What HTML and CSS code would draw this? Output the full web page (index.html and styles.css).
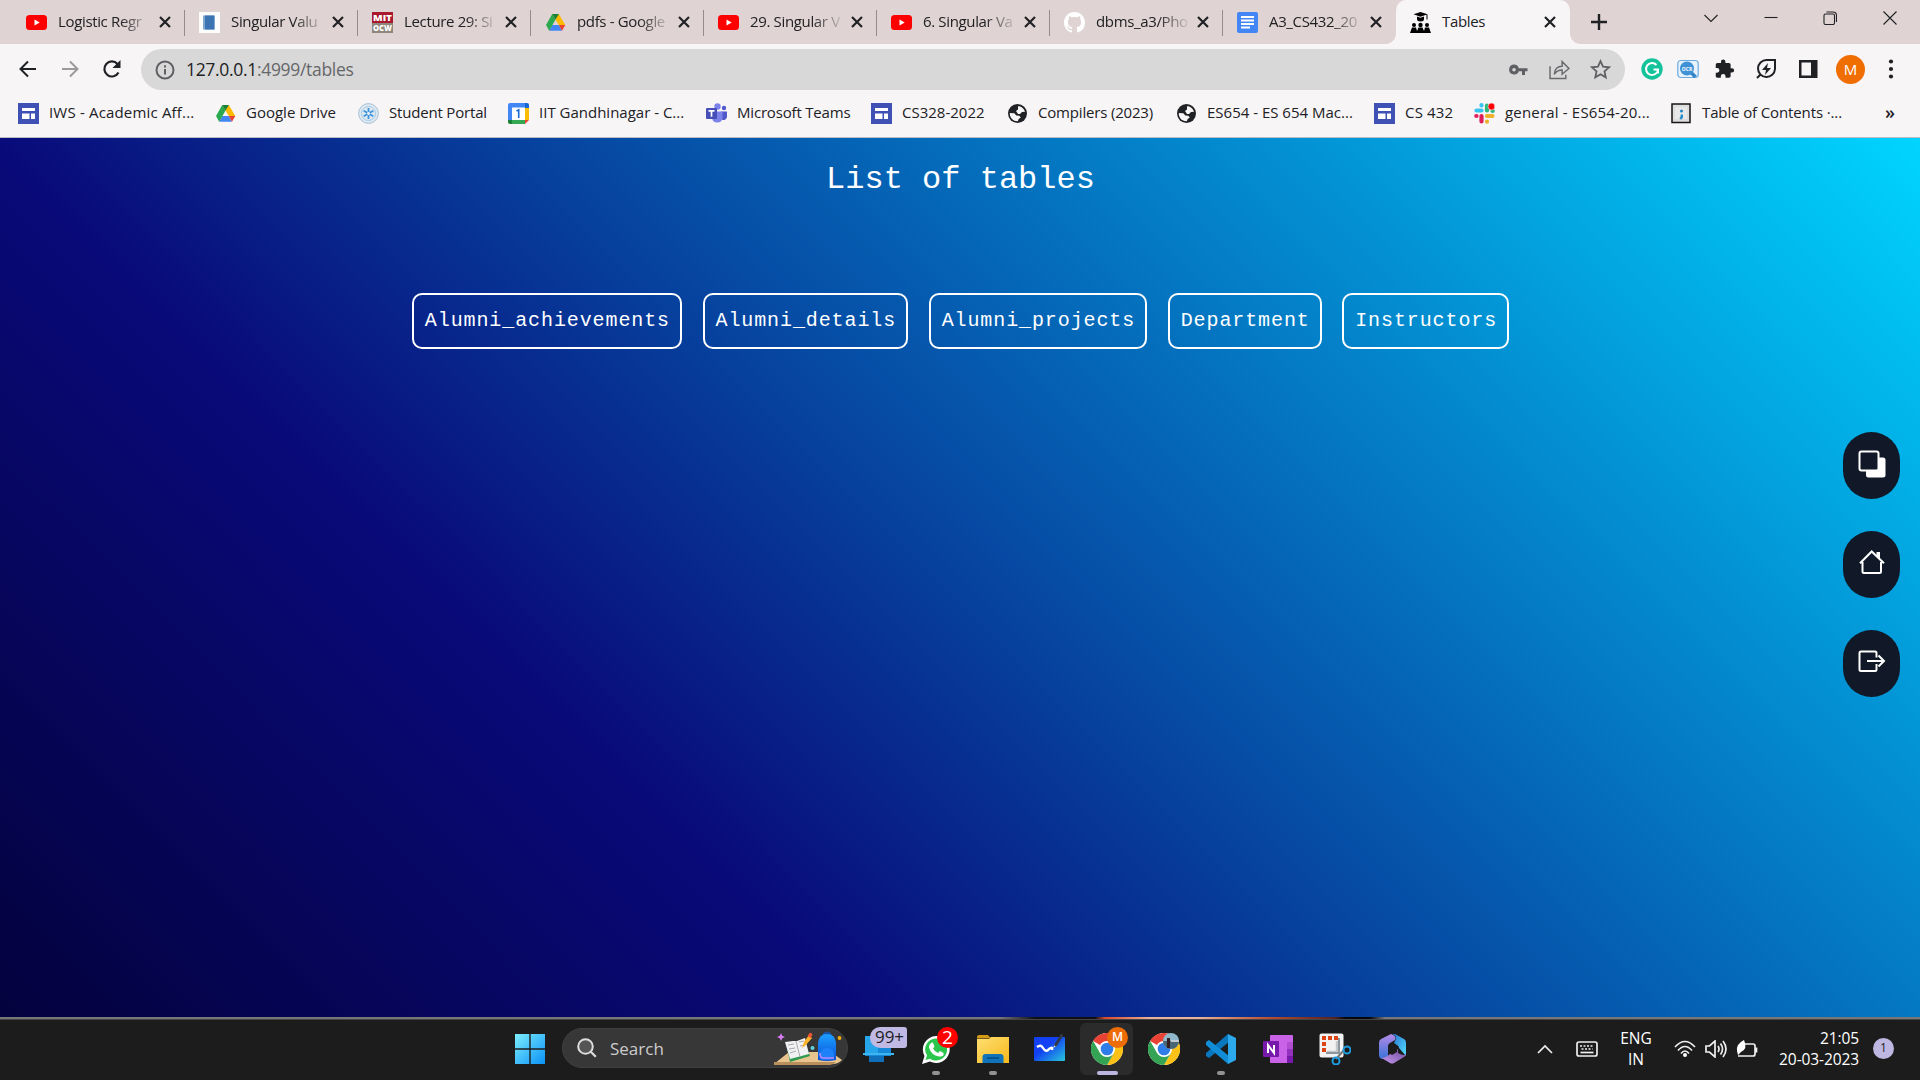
FILE: index.html
```html
<!DOCTYPE html>
<html lang="en">
<head>
<meta charset="utf-8">
<title>Tables</title>
<link rel="stylesheet" href="styles.css">
</head>
<body>
<svg class="defs" width="0" height="0">
  <defs>
    <linearGradient id="win" x1="0" y1="0" x2="1" y2="1"><stop offset="0" stop-color="#7deeff"/><stop offset="1" stop-color="#0a91f5"/></linearGradient>
    <linearGradient id="board" x1="0" y1="0" x2="1" y2="1"><stop offset=".4" stop-color="#1240f2"/><stop offset="1" stop-color="#28c8dc"/></linearGradient>
    <linearGradient id="folder" x1="0" y1="0" x2="1" y2="1"><stop offset="0" stop-color="#ffdf73"/><stop offset="1" stop-color="#f6b91c"/></linearGradient>
    <linearGradient id="bag" x1="0" y1="0" x2="0" y2="1"><stop offset="0" stop-color="#1ba0ff"/><stop offset="1" stop-color="#0b50d8"/></linearGradient>
    <linearGradient id="m1" x1="0" y1="0" x2="0" y2="1"><stop offset="0" stop-color="#b78be8"/><stop offset="1" stop-color="#3572d8"/></linearGradient>
    <linearGradient id="m2" x1="0" y1="0" x2="1" y2="1"><stop offset="0" stop-color="#2770d0"/><stop offset="1" stop-color="#55e0ff"/></linearGradient>
    <linearGradient id="m3" x1="0" y1="1" x2="1" y2="0"><stop offset="0" stop-color="#c99af0"/><stop offset="1" stop-color="#6b4a9c"/></linearGradient>
  </defs>
  <symbol id="youtube" viewBox="0 0 21 21"><rect y="3" width="21" height="15" rx="3.5" fill="#f00"/><path d="M8.500 7.400v6.200l5.200-3.100z" fill="#fff"/></symbol>
  <symbol id="drive" viewBox="0 0 21 21"><path d="M7.200 2h6.600l6.500 11h-6.500z" fill="#ffba00"/><path d="M7.300 13h6.500l3.200 5.800H4.200z" fill="#4285f4"/><path d="M1 13L7.200 2l3.300 5.600L4.200 18.800z" fill="#2aa950"/><path d="M7.200 2h6.600l-3.300 5.600z" fill="#188038"/><path d="M13.800 13h6.500L17 18.800z" fill="#ea4335"/></symbol>
  <symbol id="sites" viewBox="0 0 21 21"><path d="M0 0h21v21H0z" fill="#3f51b5"/><path d="M4 5h13v3H4zM4 10.500h7.500V16H4zM13 10.500h4V16h-4z" fill="#fff"/></symbol>
  <symbol id="globe" viewBox="0 0 21 21"><circle cx="10.500" cy="10.500" r="9.500" fill="#202124"/><path d="M11 3.200c3 0 6 2 7 5.500l-3 .3-2 2h-2l-2-3 2-1.500zM2.800 10l4.500.3 2 2.200 3 .2 1.500 2-2 1-1 2.500C6.500 18.500 2.500 15 2.800 10z" fill="#f8f5f7"/></symbol>
  <symbol id="chrome" viewBox="0 0 48 48"><circle cx="24" cy="24" r="24" fill="#fff"/><path d="M24 24L3.200 12A24 24 0 0 1 44.800 12H24z" fill="#e94235"/><path d="M44.800 12A24 24 0 0 1 24 48L34.400 30 34 16 24 12z" fill="#fbc116"/><path d="M3.200 12A24 24 0 0 0 24 48L34.400 30 24 34 13.600 30z" fill="#34a353"/><circle cx="24" cy="24" r="12" fill="#fff"/><circle cx="24" cy="24" r="9.500" fill="#2f7de9"/></symbol>
  <symbol id="x" viewBox="0 0 12 12"><path d="M1 1l10 10M11 1L1 11" stroke="#202124" stroke-width="2.200" fill="none"/></symbol>
</svg>

<header class="browser">
  <div class="tabstrip">
    <div class="tab"><svg class="fav"><use href="#youtube"/></svg><span class="name">Logistic Regr</span><svg class="close"><use href="#x"/></svg></div>
    <div class="tab"><svg class="fav" viewBox="0 0 21 21"><path d="M0 0h21v21H0z" fill="#fdfdfd"/><path d="M4 3.500h12v14H4z" fill="#7fa6cf"/><path d="M6 3.500h9v14H6z" fill="#3c73b3"/></svg><span class="name">Singular Valu</span><svg class="close"><use href="#x"/></svg></div>
    <div class="tab"><svg class="fav mitocw" viewBox="0 0 21 21"><path d="M0 0h21v11H0z" fill="#a8192e"/><path d="M0 11h21v10H0z" fill="#8f877c"/><text x="10.500" y="9.300" class="mit" textLength="19" lengthAdjust="spacingAndGlyphs">MIT</text><text x="10.500" y="19.300" class="mit" textLength="19" lengthAdjust="spacingAndGlyphs">OCW</text></svg><span class="name">Lecture 29: Si</span><svg class="close"><use href="#x"/></svg></div>
    <div class="tab"><svg class="fav"><use href="#drive"/></svg><span class="name">pdfs - Google</span><svg class="close"><use href="#x"/></svg></div>
    <div class="tab"><svg class="fav"><use href="#youtube"/></svg><span class="name">29. Singular V</span><svg class="close"><use href="#x"/></svg></div>
    <div class="tab"><svg class="fav"><use href="#youtube"/></svg><span class="name">6. Singular Va</span><svg class="close"><use href="#x"/></svg></div>
    <div class="tab"><svg class="fav" viewBox="0 0 16 16"><path fill="#fff" d="M8 0C3.580 0 0 3.580 0 8c0 3.540 2.290 6.530 5.470 7.590.4.070.55-.17.55-.38 0-.19-.01-.82-.01-1.490-2.010.37-2.530-.49-2.690-.94-.09-.23-.48-.94-.82-1.130-.28-.15-.68-.52-.01-.53.63-.01 1.080.58 1.230.82.72 1.210 1.870.87 2.330.66.07-.52.28-.87.51-1.070-1.780-.2-3.640-.89-3.640-3.950 0-.87.31-1.590.82-2.150-.08-.2-.36-1.020.08-2.120 0 0 .67-.21 2.200.82.64-.18 1.320-.27 2-.27s1.360.09 2 .27c1.530-1.040 2.200-.82 2.200-.82.44 1.100.16 1.920.08 2.120.51.56.82 1.270.82 2.150 0 3.070-1.870 3.750-3.650 3.950.29.25.54.73.54 1.480 0 1.070-.01 1.930-.01 2.200 0 .21.15.46.55.38A8.010 8.010 0 0 0 16 8c0-4.420-3.580-8-8-8z"/></svg><span class="name">dbms_a3/Pho</span><svg class="close"><use href="#x"/></svg></div>
    <div class="tab last"><svg class="fav" viewBox="0 0 21 21"><rect width="21" height="21" rx="2" fill="#4285f4"/><path d="M4 5h13M4 8.500h13M4 12h13M4 15.500h9" stroke="#fff" stroke-width="2"/></svg><span class="name">A3_CS432_20</span><svg class="close"><use href="#x"/></svg></div>
    <div class="tab active"><svg class="fav" viewBox="0 0 21 21"><path d="M10.500 0l7 2.300-7 2.400-7-2.400zM7 4.500l3.500 1.300L14 4.500v2.500a3.500 2.500 0 0 1-7 0zM16.500 2.500h1v5h-1z"/><circle cx="4" cy="13" r="2"/><circle cx="10.500" cy="13" r="2.200"/><circle cx="17" cy="13" r="2"/><path d="M0 21l2-5.500h4L7 19l1.500-3.500h4L14 19l1-3.500h4l2 5.500z"/></svg><span class="name">Tables</span><svg class="close"><use href="#x"/></svg></div>
    <svg class="plus" viewBox="0 0 16 16"><path d="M8 0v16M0 8h16" stroke="#202124" stroke-width="2.400"/></svg>
    <div class="window-controls">
      <svg viewBox="0 0 14 14"><path d="M.5 4L7 10.500 13.500 4"/></svg>
      <svg viewBox="0 0 14 14"><path d="M.5 6.500h13"/></svg>
      <svg viewBox="0 0 14 14"><rect x="1" y="3" width="10.500" height="10.500" rx="1.500"/><path d="M3.500 1h6.500q3.500 0 3.500 3.500V11"/></svg>
      <svg viewBox="0 0 14 14"><path d="M.5.5l13 13M13.500.5l-13 13"/></svg>
    </div>
  </div>

  <div class="toolbar">
    <svg class="nav" viewBox="0 0 20 20"><path d="M18 10H3M10 2.500L2.500 10l7.500 7.500" stroke="#202124"/></svg>
    <svg class="nav" viewBox="0 0 20 20"><path d="M2 10h15M10 2.500l7.500 7.500-7.500 7.500" stroke="#9b999b"/></svg>
    <svg class="nav" viewBox="0 0 20 20"><path d="M16.500 13.500a7.500 7.500 0 1 1-1-8.500L17 6.500" stroke="#202124" stroke-width="2.200"/><path d="M18.500 1v8h-8z" fill="#202124"/></svg>
    <div class="address">
      <svg class="info" viewBox="0 0 20 20"><circle cx="10" cy="10" r="8.500"/><path d="M10 9v5.500M10 5.300v2.200"/></svg>
      <span class="url">127.0.0.1<span>:4999/tables</span></span>
      <svg class="key" viewBox="0 0 20 20"><path d="M6 4.500a5 5 0 1 0 4.800 6.800H14V15h3v-3.700h2.500V8.200h-8.700A5 5 0 0 0 6 4.500zM6 8a1.800 1.800 0 1 1 0 3.600A1.800 1.800 0 0 1 6 8z" fill="#5f6064" fill-rule="evenodd"/></svg>
      <svg class="share" viewBox="0 0 20 20"><path d="M1 7v11.500h15V15M5 14.500c.5-5 3.500-7.500 7.500-7.500V2.500l6.500 6.500-6.500 5.500v-4c-3.500 0-5.500 1-7.500 4z" fill="none" stroke="#696a6d" stroke-width="1.400"/></svg>
      <svg class="star" viewBox="0 0 20 20"><path d="M10 2l2.400 5.300 5.700.6-4.300 3.900 1.200 5.700-5-2.900-5 2.900 1.200-5.700L1.900 7.900l5.700-.6z" fill="none" stroke="#5f6064" stroke-width="1.700"/></svg>
    </div>
    <div class="extensions">
      <svg viewBox="0 0 22 22"><circle cx="11" cy="11" r="10.700" fill="#15c39a"/><path d="M15.500 7A6 6 0 1 0 17 11.500h-4.500M17 11v4.500" stroke="#fff" stroke-width="2" fill="none"/></svg>
      <svg viewBox="0 0 22 22"><rect x=".8" y="2.500" width="20.400" height="17" rx="3" fill="#e9f3fb" stroke="#6aace0" stroke-width="1.200"/><path d="M13.500 14l5 5" stroke="#3684c8" stroke-width="3.500"/><circle cx="10" cy="10.500" r="7" fill="#3f92d6"/><text x="10" y="12.600" class="ocr">OCR</text></svg>
      <svg viewBox="0 0 24 24"><path d="M20.500 11H19V7c0-1.100-.9-2-2-2h-4V3.500a2.500 2.500 0 0 0-5 0V5H4c-1.100 0-2 .9-2 2v3.800h1.500a2.700 2.700 0 0 1 0 5.400H2V20c0 1.100.9 2 2 2h3.800v-1.500a2.700 2.700 0 0 1 5.400 0V22H17c1.100 0 2-.9 2-2v-4h1.500a2.500 2.500 0 0 0 0-5z" fill="#202124"/></svg>
      <svg viewBox="0 0 22 22"><path d="M20 2v9a8.500 8.500 0 1 1-8.500-9zM2 20l3-3" fill="none" stroke="#202124" stroke-width="2"/><path d="M13 5l-6 7h4l-1 5 6-7h-4z" fill="#202124"/></svg>
      <svg viewBox="0 0 22 22"><path d="M2 2h18.500v18H2zM4.500 4.500v13H14v-13z" fill="#202124" fill-rule="evenodd"/></svg>
      <span class="avatar">M</span>
      <svg viewBox="0 0 22 22"><g fill="#202124"><circle cx="11" cy="3.500" r="2.100"/><circle cx="11" cy="11" r="2.100"/><circle cx="11" cy="18.500" r="2.100"/></g></svg>
    </div>
  </div>

  <nav class="bookmarks">
    <div class="mark loose"><svg><use href="#sites"/></svg><span>IWS - Academic Aff...</span></div>
    <div class="mark"><svg><use href="#drive"/></svg><span>Google Drive</span></div>
    <div class="mark tight"><svg viewBox="0 0 21 21"><circle cx="10.500" cy="10.500" r="9.900" fill="#dce9f3" stroke="#a8bfd2"/><circle cx="10.500" cy="10.500" r="7" fill="none" stroke="#a9c9e5"/><path d="M10.500 5v11M5.700 7.800l9.600 5.500M5.700 13.200l9.600-5.500" stroke="#3d94dc" stroke-width="1.800"/><circle cx="10.500" cy="10.500" r="1.400" fill="#f4f5f8"/></svg><span>Student Portal</span></div>
    <div class="mark"><svg viewBox="0 0 21 21"><path d="M0 2q0-2 2-2h15v5H4v12H0z" fill="#4285f4"/><path d="M17 0h2q2 0 2 2v3h-4z" fill="#1967d2"/><path d="M17 5h4v12h-4z" fill="#fbbc04"/><path d="M4 17h13v4H4z" fill="#34a853"/><path d="M0 17h4v4H2q-2 0-2-2z" fill="#188038"/><path d="M17 17h4l-4 4z" fill="#ea4335"/><path d="M4 4.500h13V17H4z" fill="#fff"/><path d="M8.500 8l2.200-1.200V15" stroke="#1967d2" stroke-width="1.600" fill="none"/></svg><span>IIT Gandhinagar - C...</span></div>
    <div class="mark tight"><svg viewBox="0 0 21 21"><circle cx="18" cy="5" r="2.200" fill="#5059c9"/><path d="M15 8.500h6v5.500a3.500 3.500 0 0 1-6 2z" fill="#5059c9"/><circle cx="11.500" cy="3.500" r="3.200" fill="#7b83eb"/><path d="M6 8.500h10.500v6.500a5.300 5.300 0 0 1-10.500 0z" fill="#7b83eb"/><rect y="5" width="11" height="11" rx="1" fill="#464eb8"/><path d="M2.500 7.800h6M5.500 7.800v6" stroke="#fff" stroke-width="1.700"/></svg><span>Microsoft Teams</span></div>
    <div class="mark"><svg><use href="#sites"/></svg><span>CS328-2022</span></div>
    <div class="mark tight"><svg><use href="#globe"/></svg><span>Compilers (2023)</span></div>
    <div class="mark"><svg><use href="#globe"/></svg><span>ES654 - ES 654 Mac...</span></div>
    <div class="mark loose"><svg><use href="#sites"/></svg><span>CS 432</span></div>
    <div class="mark loose"><svg viewBox="0 0 21 21" stroke-width="4.200" stroke-linecap="round"><path d="M2.500 7.500h5M7.500 2.200v.2" stroke="#36c5f0"/><path d="M13 2.500v5" stroke="#2eb67d"/><path d="M2.300 13h.2M7.500 13v5.500" stroke="#e01e5a"/><path d="M13 13h5.500M13 18.500v.2" stroke="#ecb22e"/><path d="M18.500 8h.2" stroke="#2eb67d"/><circle cx="17.500" cy="3.500" r="3.500" fill="#f00" stroke="#f8f5f7" stroke-width=".6"/></svg><span>general - ES654-20...</span></div>
    <div class="mark"><svg viewBox="0 0 21 21"><rect x="1" y="1" width="18" height="18.500" fill="#ddd" stroke="#151515" stroke-width="1.500"/><path d="M4 4h12v12H4z" fill="#e8e8e8"/><circle cx="10.500" cy="8" r="1.600" fill="#2889c8"/><path d="M10.800 11.500v2.500l-1.500 2" stroke="#2889c8" stroke-width="2.400" fill="none"/></svg><span>Table of Contents ·...</span></div>
    <div class="more">»</div>
  </nav>
</header>

<main class="page">
  <h1>List of tables</h1>
  <div class="tables">
    <a>Alumni_achievements</a>
    <a>Alumni_details</a>
    <a>Alumni_projects</a>
    <a>Department</a>
    <a>Instructors</a>
  </div>
  <aside class="side">
    <a><svg viewBox="0 0 28 28"><rect x="8" y="7.500" width="19.500" height="20" rx="2.500" fill="#fff"/><rect x="1.500" y="1.500" width="19" height="19" rx="2" fill="#111827" stroke="#fff" stroke-width="2"/></svg></a>
    <a><svg viewBox="0 0 28 28"><path d="M4.500 13v9.500q0 1.500 1.500 1.500h15.500q1.500 0 1.500-1.500V13M2 14.200L13.700 2.500 26 14.200" fill="none" stroke="#fff" stroke-width="2"/><path d="M18.500 3H22v8l-3.500-3.500z" fill="#fff"/></svg></a>
    <a><svg viewBox="0 0 28 28"><path d="M18.500 9.500V5q0-1.500-1.500-1.500H3Q1.500 3.500 1.500 5v16.500Q1.500 23 3 23h14q1.500 0 1.500-1.500V16M9 13h17M20.500 7.500L26 13l-5.500 5.500" fill="none" stroke="#fff" stroke-width="2"/></svg></a>
  </aside>
</main>

<footer class="taskbar">
  <svg class="start" viewBox="0 0 30 30"><path d="M0 0h14.300v14.300H0zM15.700 0H30v14.300H15.700zM0 15.700h14.300V30H0zM15.700 15.700H30V30H15.700z" fill="url(#win)"/></svg>
  <div class="search">
    <svg class="lens" viewBox="0 0 20 20"><circle cx="8.500" cy="8.500" r="7.300" fill="#555" stroke="#ddd" stroke-width="2"/><path d="M13.800 13.800l5 5" stroke="#ddd" stroke-width="2.200"/></svg>
    <span>Search</span>
    <svg class="art" viewBox="0 0 68 34"><path d="M0 33l15-12h42l11 8q-4 4-9 4z" fill="#e9c48e"/><path d="M0 31h62q-3 3-6 3H0z" fill="#b98f5c"/><path d="M7 2l1.200 2.800L11 6 8.200 7.200 7 10 5.800 7.200 3 6l2.800-1.200z" fill="#da7cf5"/><path d="M12 13l18-4 6 16-20 6z" fill="#2f9a50"/><path d="M11 11l8-1 4 0 8-3 4 16-19 5z" fill="#f1f1f4"/><path d="M22 10l4 16M14 14l6-1M15 18l6-1M16 22l6-2M25 11l5-1M26 15l5-1" stroke="#aaa" stroke-width="1"/><path d="M28 17l2-6 5-7 3 3-6 7z" fill="#fdb32c"/><path d="M33.500 5l2-3q2-1 3 2l-2 3z" fill="#ef5434"/><circle cx="38.500" cy="17" r="2" fill="#5fd3dc"/><path d="M49 4q4-5 8 0" stroke="#1457b5" stroke-width="2" fill="none"/><path d="M44 29V12Q45 3 53 3t9 9v17q-9 2-18 0z" fill="url(#bag)"/><path d="M46 28v-5q1-6 7-6t7 6v5q-7 2-14 0z" fill="#1d81fa"/><path d="M46 22q0 5 3 5h11" stroke="#bd88ff" stroke-width="1.500" fill="none"/><circle cx="65.500" cy="7" r="1.900" fill="#f4ad0b"/></svg>
  </div>
  <div class="apps">
    <div class="app"><svg viewBox="0 0 32 32"><path d="M2 3h26v20H2z" fill="#1588d8"/><path d="M6 23h15v6H6z" fill="#0f6fbb"/><path d="M0 20h31v2H0z" fill="#3cb5f0"/><path d="M2 3h13v17H2z" fill="#26a5ea"/></svg><b class="count wide">99+</b></div>
    <div class="app"><svg viewBox="0 0 32 32"><path d="M16 3a13.500 13.500 0 1 1-6 25.500L2 31l2.500-8A13.500 13.500 0 0 1 16 3z" fill="#fff"/><path d="M16 5.500a11 11 0 1 1-6 20.200L5.500 27l1.500-4.500A11 11 0 0 1 16 5.500z" fill="#2bc64c"/><path d="M10.500 10.500q2-2 3 .5l1 2.500-1.500 2q2 3.500 5 4.500l2-2 3.500 2q1 4-4.500 3.500-8-1.500-10-9-.2-2.500 1.500-4z" fill="#fff"/></svg><b class="count red">2</b><i></i></div>
    <div class="app"><svg viewBox="0 0 32 32"><path d="M0 4q0-2 2-2h9l3 3.500H0z" fill="#d59a15"/><path d="M0 8V6h12l2-2h18v26H0z" fill="url(#folder)"/><path d="M5.500 30v-6q0-3 3-3h15q3 0 3 3v6z" fill="#1173ba"/><path d="M10 25h12" stroke="#064f86" stroke-width="1.700"/></svg><i></i></div>
    <div class="app"><svg viewBox="0 0 32 32"><rect y="4" width="31" height="24" rx="1" fill="url(#board)"/><path d="M3 14q4-3 6 1 3 5 6 1 4-3 3 1" fill="none" stroke="#fff" stroke-width="2.400"/><path d="M19 15l2-4 2 2z" fill="#ddd"/><path d="M20 12l7-11q2-1 2 2l-7 11z" fill="#333943"/></svg></div>
    <div class="app current"><svg><use href="#chrome"/></svg><b class="count person">M</b><i></i></div>
    <div class="app"><svg><use href="#chrome"/></svg><svg class="photo" viewBox="0 0 16 16"><clipPath id="round"><circle cx="8" cy="8" r="8"/></clipPath><g clip-path="url(#round)"><path d="M0 0h16v16H0z" fill="#8fb8cd"/><path d="M0 8h16v8H0z" fill="#496674"/><path d="M4 5h3v10H4z" fill="#351f21"/><path d="M8 7h8v2H8z" fill="#c0cbd1"/></g></svg></div>
    <div class="app"><svg viewBox="0 0 32 32"><path d="M23 1L1 20v3l3 2L24 9z" fill="#0877bd"/><path d="M4 7L1 9v3l22 19 1-8z" fill="#118dd8"/><path d="M23 1l8 4v22l-8 4z" fill="#2ca9ed"/></svg><i></i></div>
    <div class="app"><svg viewBox="0 0 32 32"><rect x="8" y="2" width="23" height="28" rx="1" fill="#ca62e8"/><path d="M25 9h6v7h-6z" fill="#b04dd0"/><path d="M25 16h6v7h-6z" fill="#9332bf"/><path d="M25 23h6v7h-6z" fill="#7719aa"/><rect x="1" y="8" width="16" height="16" rx="1" fill="#7719aa"/><path d="M6 20v-8l6 8v-8" stroke="#fff" stroke-width="2" fill="none"/></svg></div>
    <div class="app"><svg viewBox="0 0 32 32"><rect x=".5" y=".5" width="24" height="24" rx="2" fill="#f2f2f2"/><path d="M3 3h4v4H3zM9 3h4v4H9zM15 3h4v4h-4zM3 9h4v4H3zM3 15h4v4H3z" fill="#de4313"/><path d="M18 8v11H8" stroke="#c4c8cb" stroke-width="2.500" fill="none"/><path d="M20 5v15L7 20" stroke="#8d969c" stroke-width="2" fill="none"/><path d="M17 26l8-9" stroke="#777" stroke-width="2"/><circle cx="28" cy="17" r="3.500" fill="none" stroke="#1f9de0" stroke-width="2"/><circle cx="17" cy="28" r="3.500" fill="none" stroke="#1f9de0" stroke-width="2"/></svg></div>
    <div class="app"><svg viewBox="0 0 32 32"><path d="M15 1L5 6q-2 1-2 4v12q0 3 3 4l6-3V13q0-2 2-3l5-3q2-4-4-6z" fill="url(#m1)"/><path d="M16 1q6 2 3 7l-1 2 3 2q2 1 2 3l7 8V10q0-3-2-4L19 1z" fill="url(#m2)"/><path d="M4 24q3 2 7-1l11-7v4q7 4 8 0 0 3-2 4l-10 6q-2 1-4 0z" fill="url(#m3)"/><path d="M16 11l5 3v5l-5 3-4-3v-5z" fill="#1c1c1c"/></svg></div>
  </div>
  <div class="tray">
    <svg class="up" viewBox="0 0 16 10"><path d="M1 9l7-7 7 7"/></svg>
    <svg class="keyboard" viewBox="0 0 22 16"><rect x="1" y="1" width="20" height="14" rx="2"/><path d="M4 5h14M5.500 8h11" stroke-dasharray="2 1.500"/><path d="M4.500 11.500h13"/></svg>
    <div class="lang">ENG<br>IN</div>
    <svg class="net" viewBox="0 0 22 18"><path d="M1 7q10-11 20 0M4 10.500q7-8 14 0M7 13.500q4-5 8 0"/><circle cx="11" cy="15" r="2" fill="#fff" stroke="none"/></svg>
    <svg class="net" viewBox="0 0 22 18"><path d="M1 6v6h3.500L10 17V1L4.500 6zM13 6q2 3 0 6M15.500 3.500q4 5.500 0 11M18 1q6 8 0 16"/></svg>
    <svg class="net" viewBox="0 0 22 18"><path d="M9 4h8q2 0 2 2v8q0 2-2 2H2M20.500 7.500v5"/><path d="M1 11Q0 4 8 0q4 9-3 12l-3 3" fill="#fff" stroke="none"/></svg>
    <div class="clock">21:05<br>20-03-2023</div>
    <span class="notice">1</span>
  </div>
</footer>
</body>
</html>
```
FILE: styles.css
```css
* { box-sizing: border-box; }
body {
  margin: 0;
  width: 1920px;
  height: 1080px;
  overflow: hidden;
  display: flex;
  flex-direction: column;
  font-family: "Open Sans", "Noto Sans", sans-serif;
  color: #202124;
}
svg { display: block; flex: none; }
.defs { position: absolute; }

.browser { height: 138px; flex: none; background: #f8f5f7; border-bottom: 1px solid #b9bcc6; }
.tabstrip { height: 44px; display: flex; align-items: center; background: #e0d3d3; padding-left: 12px; }
.tab { width: 173px; height: 44px; display: flex; align-items: center; padding-left: 14px; position: relative; }
.tab::after { content: ""; position: absolute; right: 0; top: 10px; width: 1px; height: 26px; background: #958d8d; }
.tab.last::after { display: none; }
.fav { width: 21px; height: 21px; }
.mitocw { overflow: visible; }
.name {
  width: 100px;
  margin-left: 11px;
  padding-bottom: 2px;
  font-size: 15px;
  letter-spacing: -.35px;
  white-space: nowrap;
  mask-image: linear-gradient(90deg, #000 62px, transparent 95px);
}
.close { width: 12px; height: 12px; margin-left: .5px; }
.tab.active { width: 174px; background: #f8f5f7; border-radius: 10px 10px 0 0; }
.tab.active::after, .tab.active::before {
  content: "";
  position: absolute;
  top: 34px;
  width: 10px;
  height: 10px;
  background: radial-gradient(circle at 100% 0, transparent 9.5px, #f8f5f7 10px);
}
.tab.active::before { left: -10px; background: radial-gradient(circle at 0 0, transparent 9.5px, #f8f5f7 10px); }
.tab.active::after { right: -10px; }
.active .name { mask-image: none; width: 101px; }
.plus { width: 16px; height: 16px; margin-left: 21px; }
.mit { font: 900 9px "Open Sans", sans-serif; fill: #fff; text-anchor: middle; }
.window-controls { display: flex; gap: 45.500px; margin: -8px 0 0 97px; }
.window-controls svg { width: 14px; height: 14px; fill: none; stroke: #202124; stroke-width: 1.100; }

.toolbar { height: 51px; display: flex; align-items: center; padding-left: 18px; }
.nav { width: 20px; height: 20px; margin: -2px 22px 0 0; fill: none; stroke-width: 2; }
.address { width: 1484px; height: 41px; margin: 0 0 0 -3px; display: flex; align-items: center; border-radius: 21px; background: #d8d8d8; padding: 0 14.500px 0 14px; }
.info { width: 20px; height: 20px; fill: none; stroke: #5f6064; stroke-width: 2; }
.url { flex: 1; margin-left: 11px; padding-bottom: 2px; font-size: 17.500px; letter-spacing: -.32px; }
.url span { color: #66676a; }
.key { width: 20px; height: 20px; }
.share { width: 21px; height: 21px; margin: 0 20px 0 21px; }
.star { width: 21px; height: 21px; }
.extensions { display: flex; align-items: center; gap: 14px; margin: -1px 0 0 16px; }
.extensions svg { width: 22px; height: 22px; }
.extensions svg:nth-child(3) { width: 21px; margin-left: 1px; }
.extensions svg:nth-child(4) { margin: 0 6px 0 6px; }
.avatar { width: 29px; height: 29px; border-radius: 50%; background: #f06d00; color: #fff; display: grid; place-items: center; font-size: 15px; margin: 0 1px 0 3px; }
.ocr { font: 700 5px "Open Sans", sans-serif; fill: #fff; text-anchor: middle; }

.bookmarks {
  height: 42px;
  margin-top: -3px;
  padding-left: 18px;
  display: grid;
  grid-template-columns: 197px 143px 150px 198px 165px 136px 169px 198px 100px 197px 214px 30px;
  align-items: center;
  font-size: 15px;
  letter-spacing: 0;
}
.mark { display: flex; align-items: center; gap: 10px; white-space: nowrap; }
.mark span { padding-bottom: 2px; }
.tight { letter-spacing: -.18px; }
.loose { letter-spacing: .18px; }
.mark svg { width: 21px; height: 21px; }
.mark:nth-child(11) { letter-spacing: -.12px; }
.more { font-size: 18px; font-weight: 600; padding-bottom: 3px; }

.page {
  flex: 1;
  position: relative;
  display: flex;
  flex-direction: column;
  align-items: center;
  padding-left: 1px;
  color: #fff;
  font-family: "Liberation Mono", monospace;
  background: linear-gradient(45deg, #020030 0%, #090979 35%, #00d4ff 100%) top / 100% 1065px no-repeat;
}
h1 { margin: 22px 0 0; font-size: 32px; line-height: 40px; font-weight: 400; }
.tables { display: flex; gap: 20.500px; margin-top: 93px; }
.tables a { height: 56px; border: 2px solid #fff; border-radius: 10px; padding: 0 10px 0 11px; font-size: 20px; letter-spacing: .9px; line-height: 52px; }
.side { position: absolute; right: 20px; top: 294px; display: flex; flex-direction: column; gap: 32px; }
.side a { width: 57px; height: 67px; border-radius: 28.500px; background: #111827; display: flex; justify-content: center; padding-top: 18px; }
.side svg { width: 28px; height: 28px; }

.taskbar { height: 63px; flex: none; position: relative; background: #1c1c1c; color: #fff; display: flex; align-items: center; padding-left: 515px; }
.taskbar::before {
  content: "";
  position: absolute;
  inset: 0 0 auto;
  height: 2px;
  border-bottom: 1px solid #454545;
  background: linear-gradient(90deg, #777 0 1000px, #101010 1035px 1095px, #d94a2a 1105px, #e9b29a 1150px 1200px, #b74d30 1270px, #522 1335px, #080808 1345px 1370px, #777 1385px);
}
.start { width: 30px; height: 30px; }
.search { width: 286px; height: 40px; margin: -1px 0 0 17px; border-radius: 20px; background: #373737; border: 1px solid #414141; display: flex; align-items: center; padding: 0 5px 0 14px; }
.lens { width: 20px; height: 20px; }
.search span { font-size: 17px; color: #ccc; margin-left: 13px; flex: 1; }
.art { width: 68px; height: 34px; }
.apps { display: flex; margin-left: 2px; }
.app { width: 57px; height: 52px; position: relative; display: grid; place-items: center; }
.app > svg { width: 32px; height: 32px; }
.app i { position: absolute; bottom: 0; left: 25px; width: 8px; height: 4px; border-radius: 2px; background: #929292; }
.current::before { content: ""; position: absolute; inset: 0 2px; border-radius: 6px; background: #2b2b2b; }
.current svg { position: relative; }
.app.current i { width: 21px; left: 19px; background: #beb5e0; }
.count { position: absolute; font-weight: 400; display: grid; place-items: center; line-height: 20px; }
.wide { left: 20px; top: 4px; width: 37px; height: 21px; border-radius: 10px 3px 3px 10px; background: #c0b9e3; color: #202124; font-size: 17px; padding-left: 2px; }
.red { left: 30px; top: 4px; width: 21px; height: 21px; border-radius: 50%; background: #f00; font-size: 19px; }
.person { left: 29px; top: 4px; width: 21px; height: 21px; border-radius: 50%; background: #ec6c05; font-size: 12px; font-weight: 600; }
.app .photo { position: absolute; left: 28px; top: 10px; width: 16px; height: 16px; }

.tray { display: flex; align-items: center; margin-left: 117px; font-size: 15.500px; line-height: 20.500px; letter-spacing: -.1px; }
.tray svg { fill: none; stroke: #eee; stroke-width: 1.700; }
.up { width: 16px; height: 10px; }
.keyboard { width: 22px; height: 16px; margin-left: 23px; }
.lang { width: 40px; margin-left: 18px; text-align: center; }
.net { width: 22px; height: 18px; margin-left: 9px; }
.lang + .net { margin-left: 18px; }
.clock { width: 92px; margin-left: 9px; text-align: right; white-space: nowrap; }
.notice { width: 21px; height: 21px; margin-left: 14px; border-radius: 50%; background: #beb7e2; color: #222; display: grid; place-items: center; font-size: 12px; }
```
